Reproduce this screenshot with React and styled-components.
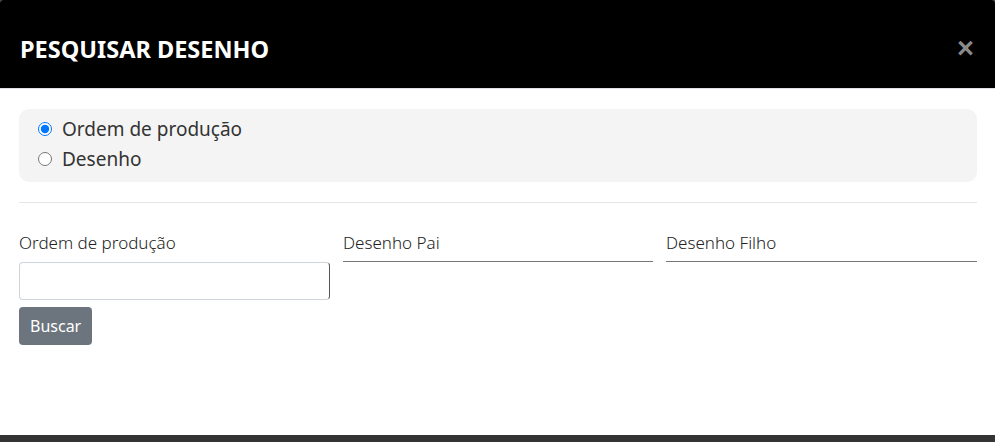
import React, { useState } from 'react';
import styled, { createGlobalStyle } from 'styled-components';

const GlobalStyle = createGlobalStyle`
    html, body {
        margin: 0;
        padding: 0;
        background: #343434;
    }
    * {
        box-sizing: border-box;
    }
`;

const Backdrop = styled.div`
    width: 995px;
    height: 442px;
    background: #343434;
    font-family: "Noto Sans", "Open Sans", sans-serif;
    color: #212529;
`;

const Modal = styled.div`
    height: 435px;
    background: #fff;
    border-radius: 3px 3px 0 0;
    overflow: hidden;
    display: flex;
    flex-direction: column;
`;

const Header = styled.div`
    height: 89px;
    background: #000;
    border-bottom: 1px solid #dee2e6;
    display: flex;
    align-items: center;
    justify-content: space-between;
    padding: 9px 21px 0 20px;
`;

const Title = styled.h5`
    margin: 0;
    color: #fff;
    font-size: 23.5px;
    font-weight: 700;
    letter-spacing: 0;
`;

const Close = styled.button`
    background: none;
    border: none;
    padding: 0;
    color: #8a8a8a;
    font-size: 29px;
    font-weight: 700;
    line-height: 1;
    cursor: pointer;
    font-family: "Liberation Sans", Arial, sans-serif;
`;

const Body = styled.div`
    padding: 20px 18px 0 19px;
`;

const OptionPanel = styled.div`
    background: #f4f4f4;
    border-radius: 10px;
    padding: 5px 19px 8px 19px;
    display: flex;
    flex-direction: column;
`;

const RadioRow = styled.label`
    display: flex;
    align-items: center;
    gap: 10px;
    height: 30px;
    font-size: 19px;
    color: #333;
    cursor: pointer;
`;

const Radio = styled.input`
    margin: 0;
    width: 14px;
    height: 14px;
    accent-color: #0075ff;
`;

const Divider = styled.hr`
    margin: 20px 0 0 0;
    border: none;
    border-top: 1px solid #e6e6e6;
`;

const Fields = styled.div`
    display: grid;
    grid-template-columns: 311px 310px 311px;
    column-gap: 13px;
    margin-top: 28px;
`;

const Field = styled.div`
    display: flex;
    flex-direction: column;
`;

const Label = styled.label`
    font-size: 17px;
    font-weight: 300;
    color: #222;
    height: 31px;
    line-height: 24px;
    border-bottom: ${(p) => (p.$underline ? '1px solid #777' : 'none')};
`;

const Input = styled.input`
    height: 38px;
    border: 1px solid #ced4da;
    border-right-color: #555;
    border-radius: 4px;
    padding: 6px 12px;
    font-size: 16px;
    font-family: inherit;
`;

const Button = styled.button`
    align-self: flex-start;
    margin-top: 7px;
    height: 38px;
    padding: 0 11px;
    background: #6c757d;
    color: #fff;
    border: none;
    border-radius: 4px;
    font-size: 16px;
    font-family: inherit;
    cursor: pointer;
`;

const App = () => {
    const [mode, setMode] = useState('ordem');
    const [ordem, setOrdem] = useState('');

    return (
        <Backdrop>
            <GlobalStyle />
            <Modal>
                <Header>
                    <Title>PESQUISAR DESENHO</Title>
                    <Close type="button">×</Close>
                </Header>
                <Body>
                    <OptionPanel>
                        <RadioRow>
                            <Radio type="radio" name="mode" checked={mode === 'ordem'} onChange={() => setMode('ordem')} />
                            Ordem de produção
                        </RadioRow>
                        <RadioRow>
                            <Radio type="radio" name="mode" checked={mode === 'desenho'} onChange={() => setMode('desenho')} />
                            Desenho
                        </RadioRow>
                    </OptionPanel>
                    <Divider />
                    <Fields>
                        <Field>
                            <Label>Ordem de produção</Label>
                            <Input type="text" value={ordem} onChange={(e) => setOrdem(e.target.value)} />
                            <Button type="button">Buscar</Button>
                        </Field>
                        <Field>
                            <Label $underline>Desenho Pai</Label>
                        </Field>
                        <Field>
                            <Label $underline>Desenho Filho</Label>
                        </Field>
                    </Fields>
                </Body>
            </Modal>
        </Backdrop>
    );
};

export default App;
